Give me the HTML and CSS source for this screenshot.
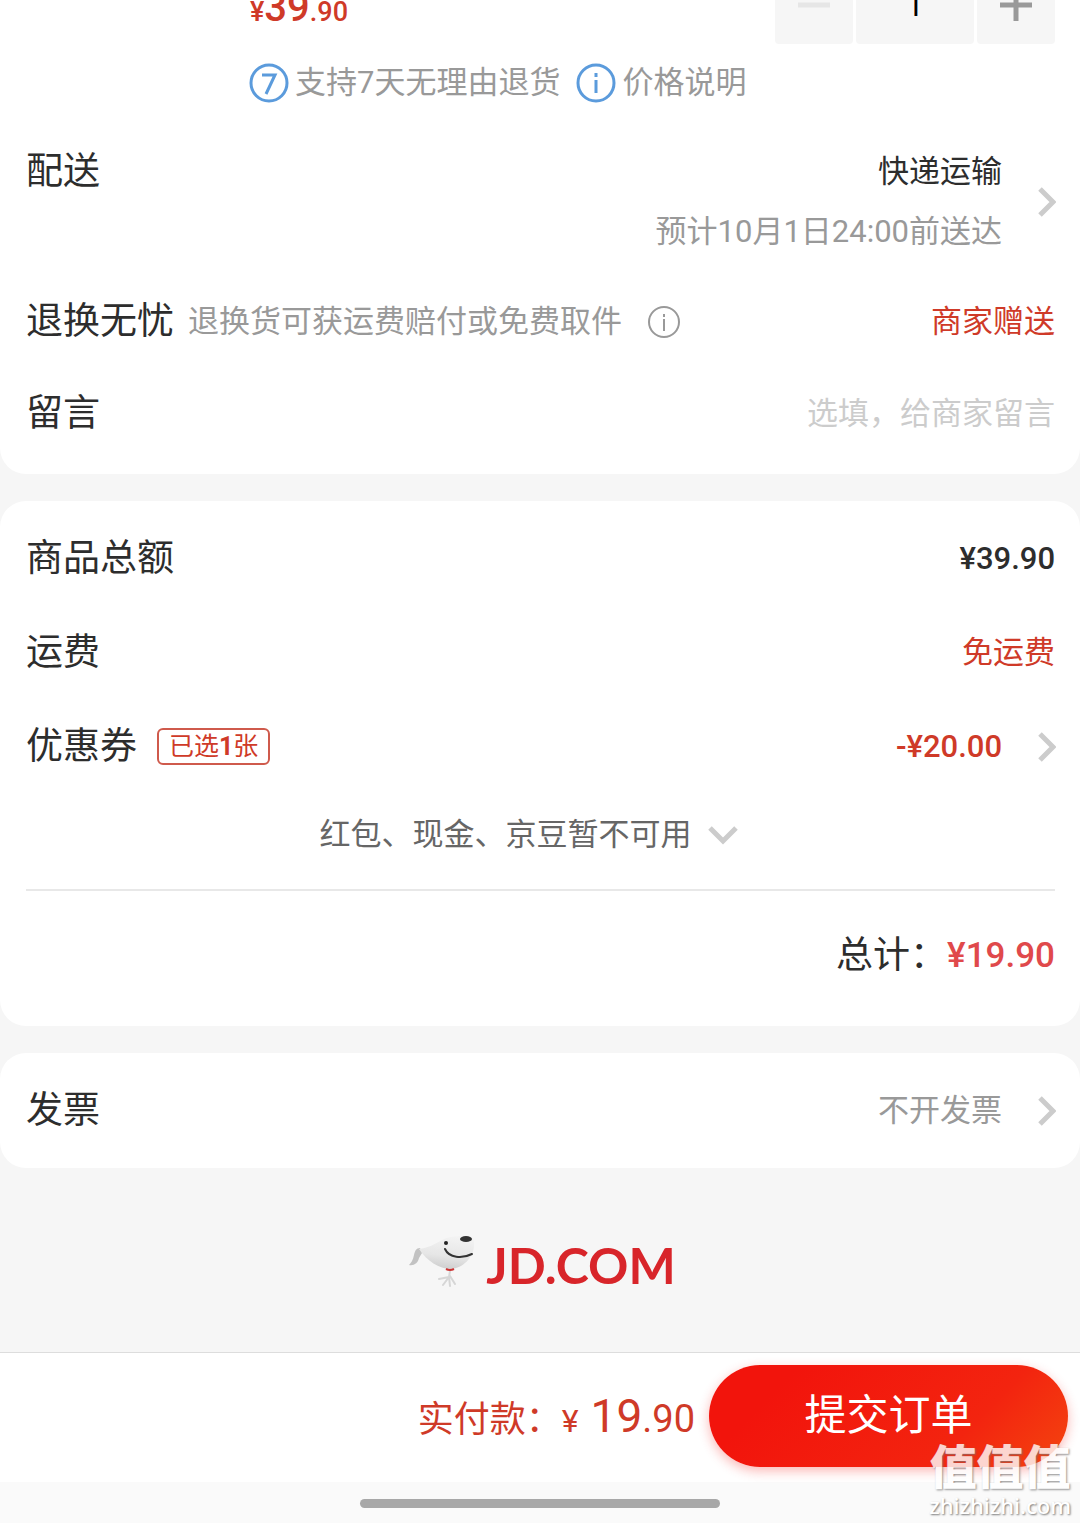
FILE: index.html
```html
<!doctype html>
<html lang="zh-CN">
  <head>
    <meta charset="utf-8">
    <meta name="viewport" content="width=device-width">
    <title>填写订单</title>
    <link rel="stylesheet" href="styles.css">
  </head>
  <body>

    <main>
      <section class="card first">
        <div class="goods">
          <p class="price">¥<span class="big">39</span>.90</p>
          <div class="stepper">
            <button class="step" disabled aria-label="减少">
              <svg width="32" height="32"><path d="M0 16H32" stroke="#e6e6e6" stroke-width="5"/></svg>
            </button>
            <input class="count" type="text" value="1" aria-label="数量">
            <button class="step" aria-label="增加">
              <svg width="32" height="32"><path d="M0 16H32M16 0V32" stroke="#999" stroke-width="5"/></svg>
            </button>
          </div>
        </div>

        <div class="service">
          <svg width="40" height="40" fill="none" stroke="#5b9bdc">
            <circle cx="20" cy="20" r="18" stroke-width="3"/>
            <path d="M13 12H26L17 31" stroke-width="3"/>
          </svg>
          <span>支持7天无理由退货</span>
          <svg class="second" width="40" height="40" fill="none" stroke="#5b9bdc">
            <circle cx="20" cy="20" r="18" stroke-width="3"/>
            <path d="M20 10V14M20 17V30" stroke-width="3"/>
          </svg>
          <span>价格说明</span>
        </div>

        <a class="delivery" href="#delivery">
          <span class="label">配送</span>
          <span class="when">快递运输<br><span class="gray">预计10月1日24:00前送达</span></span>
          <svg class="arrow" width="20" height="30"><path d="M4 2L17 15L4 28" fill="none" stroke="#ccc" stroke-width="5"/></svg>
        </a>

        <div class="row short">
          <span class="label">退换无忧</span>
          <span class="note">退换货可获运费赔付或免费取件</span>
          <svg class="tip" width="32" height="32" fill="none" stroke="#999">
            <circle cx="16" cy="16" r="15" stroke-width="2"/>
            <path d="M16 8V11M16 13V25" stroke-width="2"/>
          </svg>
          <span class="value red">商家赠送</span>
        </div>

        <div class="row short">
          <label class="label" for="message">留言</label>
          <input id="message" class="message" type="text" placeholder="选填，给商家留言">
        </div>
      </section>

      <section class="card amounts">
        <div class="row">
          <span class="label">商品总额</span>
          <span class="value money">¥39.90</span>
        </div>
        <div class="row">
          <span class="label">运费</span>
          <span class="value red">免运费</span>
        </div>
        <a class="row" href="#coupon">
          <span class="label">优惠券</span>
          <span class="tag">已选<b>1</b>张</span>
          <span class="value money red">-¥20.00</span>
          <svg class="arrow" width="20" height="30"><path d="M4 2L17 15L4 28" fill="none" stroke="#ccc" stroke-width="5"/></svg>
        </a>
        <button class="more">
          红包、现金、京豆暂不可用
          <svg width="30" height="20"><path d="M2 3L15 16L28 3" fill="none" stroke="#ccc" stroke-width="5"/></svg>
        </button>
        <div class="total">
          <span class="label">总计：</span>
          <span class="sum">¥19.90</span>
        </div>
      </section>

      <section class="card invoice">
        <a class="row" href="#invoice">
          <span class="label">发票</span>
          <span class="value gray">不开发票</span>
          <svg class="arrow" width="20" height="30"><path d="M4 2L17 15L4 28" fill="none" stroke="#ccc" stroke-width="5"/></svg>
        </a>
      </section>

      <div class="logo">
        <svg width="66" height="54" viewBox="0 -1 66 54">
          <defs>
            <linearGradient id="dog" x1="0.6" y1="0" x2="0.4" y2="1">
              <stop offset="0" stop-color="#f3f3f3"/>
              <stop offset="0.6" stop-color="#e6e6e6"/>
              <stop offset="1" stop-color="#cdcdcd"/>
            </linearGradient>
          </defs>
          <!-- tail -->
          <path d="M12 12C8 12 7 15 6 19C5 24 3 27 1 29C6 30 10 27 11 22L14 17Z" fill="#c2c2c2"/>
          <!-- legs -->
          <path d="M42 35L41 41L31 43M41 41L35 49M41 41L42 50M42 40L47 48" fill="none" stroke="#d6d6d6" stroke-width="2" stroke-linecap="round" stroke-linejoin="round"/>
          <path d="M11 13C20 12 27 8 34 4C41 0 50 0 58 0C64 0 66 2 66 7C67 20 56 32 43 33C31 33 19 25 11 13Z" fill="url(#dog)"/>
          <path d="M38 33Q42 35 46 33" fill="none" stroke="#c33" stroke-width="2"/>
          <circle cx="38" cy="7" r="2" fill="#222"/>
          <ellipse cx="58" cy="3" rx="6" ry="3" fill="#333"/>
          <path d="M37 13C41 22 54 23 64 18" fill="none" stroke="#333" stroke-width="2" stroke-linecap="round"/>
        </svg>
        <span>JD.COM</span>
      </div>
    </main>

    <footer>
      <div class="bar">
        <p class="pay">实付款：<span class="yen">¥</span><span class="whole">19</span><span class="cents">.90</span></p>
        <button class="submit">提交订单</button>
      </div>
      <div class="bottom">
        <div class="home"></div>
      </div>
      <div class="mark">
        <span class="zhi">值值值</span>
        <span class="site">zhizhizhi.com</span>
      </div>
    </footer>

  </body>
</html>
```
FILE: styles.css
```css
* {
  box-sizing: border-box;
}

body {
  margin: 0;
  background-color: #f6f6f6;
  color: #2d2d2d;
  font-family: Roboto, "Noto Sans CJK SC", sans-serif;
  font-size: 31px;
  line-height: 44px;
}

p {
  margin: 0;
}

a {
  color: inherit;
  text-decoration: none;
}

button, input {
  border: none;
  padding: 0;
  font: inherit;
  color: inherit;
  background: none;
}

svg {
  flex: none;
}

.card {
  margin-bottom: 27px;
  padding: 0 25px 0 26px;
  background-color: #fff;
  border-radius: 26px;
}

.first {
  padding-bottom: 15px;
  border-top-left-radius: 0;
  border-top-right-radius: 0;
}

/* the goods line is scrolled half out of view */
.goods {
  display: flex;
  justify-content: space-between;
  align-items: flex-end;
  height: 44px;
  padding-left: 224px;
  overflow: hidden;
}

.price {
  padding-bottom: 10px;
  color: #cf3a28;
  font-size: 27px;
  font-weight: 500;
}

.big {
  font-size: 40px;
}

.stepper {
  display: flex;
  gap: 3px;
}

.step, .count {
  display: flex;
  justify-content: center;
  align-items: center;
  width: 78px;
  height: 78px;
  background-color: #f6f6f6;
  border-radius: 4px;
}

.count {
  width: 118px;
  color: #000;
  text-align: center;
}

.service {
  display: flex;
  align-items: center;
  gap: 6px;
  height: 77px;
  padding-left: 223px;
  color: #999;
}

.second {
  margin-left: 10px;
}

.delivery {
  display: flex;
  align-items: center;
  padding: 21px 0 13px;
  line-height: 60px;
}

.delivery .label {
  align-self: flex-start;
}

.when {
  margin-left: auto;
  text-align: right;
}

.row {
  display: flex;
  align-items: center;
  height: 94px;
  padding-top: 3px;
}

.short {
  height: 92px;
  padding-top: 1px;
}

.label {
  font-size: 37px;
}

.note {
  margin-left: 14px;
  color: #999;
}

.tip {
  margin-left: 26px;
}

.value {
  margin-left: auto;
}

.money {
  font-weight: 500;
}

.arrow {
  margin-left: 34px;
  margin-right: -1px;
}

.message {
  flex: 1;
  min-width: 0;
  text-align: right;
}

.message::placeholder {
  color: #ccc;
}

.gray {
  color: #999;
}

.red {
  color: #cf3a28;
}

.amounts {
  padding-top: 9px;
  padding-bottom: 4px;
}

.tag {
  margin-left: 20px;
  padding: 0 10px;
  border: 2px solid #cf5a4c;
  border-radius: 6px;
  color: #cf3a28;
  font-size: 25px;
  line-height: 33px;
}

.more {
  display: flex;
  justify-content: center;
  align-items: center;
  gap: 16px;
  width: 100%;
  height: 84px;
  padding-top: 2px;
  padding-right: 24px;
  color: #666;
}

.total {
  display: flex;
  justify-content: flex-end;
  align-items: center;
  height: 132px;
  margin-top: 13px;
  margin-bottom: 1px;
  border-top: 2px solid #e8e8e8;
}

.sum {
  color: #e0494b;
  font-size: 35px;
  font-weight: 500;
}

.invoice {
  padding-top: 9px;
  padding-bottom: 12px;
}

.logo {
  display: flex;
  justify-content: center;
  align-items: center;
  gap: 12px;
  height: 157px;
  padding-bottom: 24px;
  padding-left: 4px;
  color: #d8252a;
  font-family: Lato, sans-serif;
  font-size: 50px;
  font-weight: 700;
}

.logo span {
  padding-top: 6px;
}

footer {
  position: relative;
}

.bar {
  display: flex;
  justify-content: flex-end;
  align-items: center;
  gap: 14px;
  height: 130px;
  padding-right: 12px;
  padding-bottom: 3px;
  background-color: #fff;
  border-top: 1px solid #ddd;
}

.pay {
  padding-top: 4px;
  color: #cf3a28;
  font-size: 36px;
}

.yen {
  margin-right: 12px;
  font-size: 32px;
}

.whole {
  font-size: 46px;
}

.cents {
  font-size: 38px;
}

.submit {
  width: 359px;
  height: 102px;
  border-radius: 51px;
  background-image: linear-gradient(135deg, #f2140c 20%, #f3240f 70%, #f4450f);
  box-shadow: 0 4px 12px rgba(242, 20, 12, 0.3);
  color: #fff;
  font-size: 42px;
}

.bottom {
  padding: 17px 0 15px;
  background-color: #fafafa;
}

.home {
  width: 360px;
  height: 9px;
  margin: 0 auto;
  border-radius: 5px;
  background-color: #a8a8a8;
}

/* watermark over the button and the home bar */
.mark {
  position: absolute;
  right: 9px;
  bottom: 4px;
  display: flex;
  flex-direction: column;
  align-items: center;
  color: #fff;
  text-shadow: 1px 1px 2px #777;
}

.zhi {
  font-size: 47px;
  font-weight: 900;
  line-height: 46px;
  opacity: 0.8;
}

.site {
  font-family: "Noto Sans", sans-serif;
  font-size: 22px;
  font-weight: 500;
  line-height: 28px;
}
```
